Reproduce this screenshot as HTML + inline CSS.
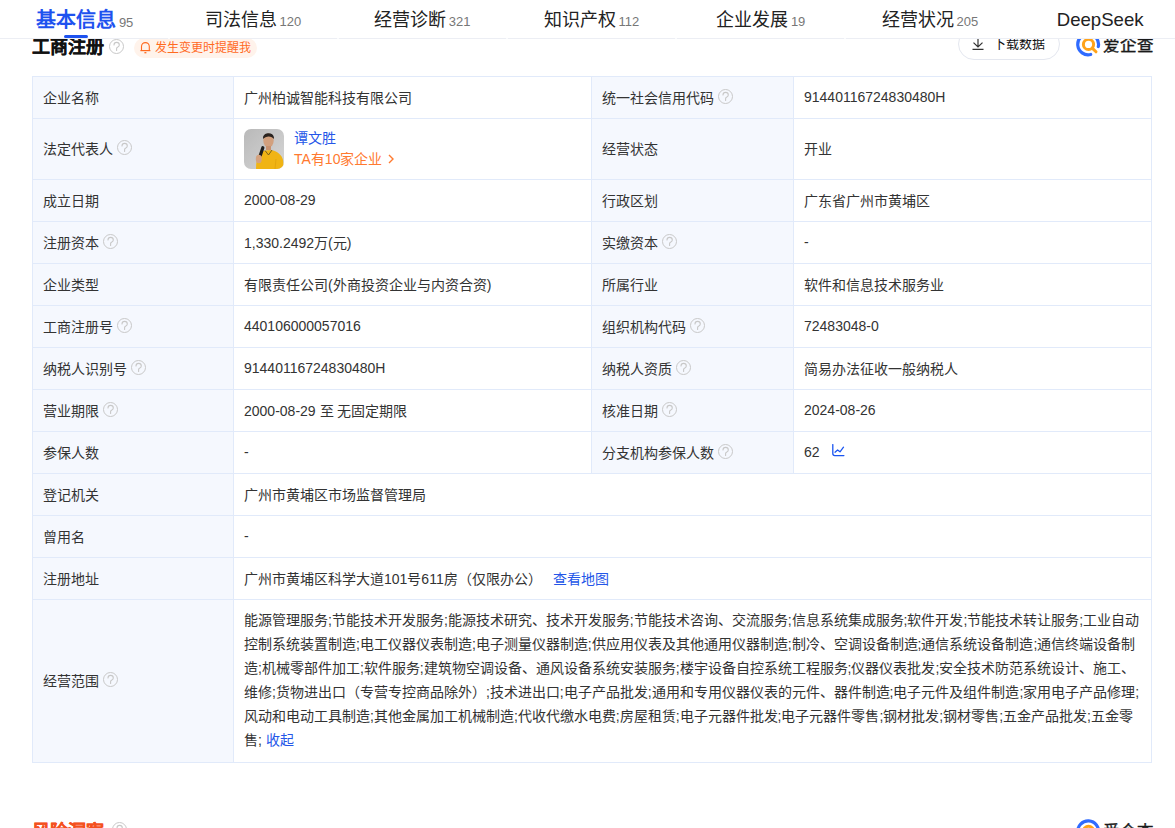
<!DOCTYPE html>
<html lang="zh-CN"><head><meta charset="utf-8">
<style>
*{margin:0;padding:0;box-sizing:border-box;}
html,body{width:1175px;height:828px;overflow:hidden;background:#fff;}
body{position:relative;font-family:"Liberation Sans",sans-serif;color:#333;font-size:14px;}
.hdr{position:absolute;left:0;top:0;width:1175px;height:39px;background:#fff;border-bottom:1px solid #eceef4;z-index:10;}
.tab{position:absolute;top:2px;height:36px;width:169.25px;text-align:center;white-space:nowrap;line-height:37px;font-size:18px;color:#222;}
.tab .n{font-size:13px;color:#777;margin-left:3px;}
.tab.act{font-size:20px;font-weight:bold;color:#1e52ef;}
.tab.act .n{font-weight:normal;-webkit-text-stroke:0;}
.bar{position:absolute;left:64px;top:35px;width:24px;height:3px;background:#1e52ef;border-radius:2px;z-index:11;}
.ttl{position:absolute;left:32px;top:35px;font-size:18px;font-weight:bold;color:#111;-webkit-text-stroke:0.25px #111;line-height:24px;white-space:nowrap;}
.qi{display:inline-block;width:15px;height:15px;vertical-align:middle;}
.pill{position:absolute;left:134px;top:38px;width:123px;height:20px;border-radius:10px;background:#fff3eb;color:#ff6a1f;font-size:12px;line-height:20px;white-space:nowrap;}
.pill svg{position:absolute;left:6px;top:3px;}
.pill span{position:absolute;left:21px;top:0;}
.dl{position:absolute;left:958px;top:28px;width:102px;height:32px;border:1px solid #e4e7ef;border-radius:16px;font-size:13px;color:#111;line-height:30px;white-space:nowrap;}
.dl svg{position:absolute;left:13px;top:9px;}
.dl span{position:absolute;left:34px;top:0px;}
.logo{position:absolute;left:1076px;top:32px;width:80px;height:26px;}
.logo span{position:absolute;left:27px;top:1px;font-size:16.5px;font-weight:normal;-webkit-text-stroke:0.45px #1a1a1a;color:#1a1a1a;line-height:24px;letter-spacing:0px;white-space:nowrap;}
.tbl{position:absolute;left:32px;top:76px;width:1120px;border:1px solid #e1eafa;}
.row{display:flex;height:42px;border-top:1px solid #e1eafa;}
.row:first-child{border-top:none;height:41px;}
.c{height:100%;display:flex;align-items:center;padding-left:10px;padding-bottom:2px;border-right:1px solid #e1eafa;white-space:nowrap;}
.l{background:#f5f8fe;}
.c1{width:201px;}.c2{width:358px;}.c3{width:202px;}.c4{width:357px;border-right:none;}
.wide{width:917px;border-right:none;}
.row .qi{margin-left:4px;margin-top:-1px;}
.lnk{color:#2456e8;}
.scope{display:block;padding-top:8px;line-height:24px;}
.scope div{white-space:nowrap;}
.rsk{position:absolute;left:32px;top:820px;font-size:18px;font-weight:bold;color:#f4511e;-webkit-text-stroke:0.25px #f4511e;line-height:24px;white-space:nowrap;}
</style></head>
<body>
<svg width="0" height="0" style="position:absolute">
 <defs>
  <symbol id="q" viewBox="0 0 15 15"><circle cx="7.5" cy="7.5" r="7" fill="none" stroke="#c8c8c8" stroke-width="1"/><path d="M5 6 C5 4.3 6.2 3.4 7.6 3.4 C9.1 3.4 10.3 4.4 10.3 5.9 C10.3 7.2 9.4 7.7 8.5 8.2 C7.9 8.5 7.6 8.9 7.6 9.6 L7.6 11.4" fill="none" stroke="#c8c8c8" stroke-width="1.1" stroke-linecap="round"/></symbol>
 </defs>
</svg>
<div class="hdr">
  <div class="tab act" style="left:0">基本信息<span class="n">95</span></div>
  <div class="tab" style="left:168.25px">司法信息<span class="n">120</span></div>
  <div class="tab" style="left:337.5px">经营诊断<span class="n">321</span></div>
  <div class="tab" style="left:506.75px">知识产权<span class="n">112</span></div>
  <div class="tab" style="left:676px">企业发展<span class="n">19</span></div>
  <div class="tab" style="left:845.25px">经营状况<span class="n">205</span></div>
  <div class="tab" style="left:1015.5px;font-size:18.6px;top:1px">DeepSeek</div>
</div>
<div class="bar"></div>
<div style="position:absolute;left:168px;top:38px;width:2px;height:1px;background:#fafbfd;z-index:12"></div><div style="position:absolute;left:337px;top:38px;width:2px;height:1px;background:#fafbfd;z-index:12"></div><div style="position:absolute;left:506px;top:38px;width:2px;height:1px;background:#fafbfd;z-index:12"></div><div style="position:absolute;left:675px;top:38px;width:2px;height:1px;background:#fafbfd;z-index:12"></div><div style="position:absolute;left:844px;top:38px;width:2px;height:1px;background:#fafbfd;z-index:12"></div><div style="position:absolute;left:1013px;top:38px;width:2px;height:1px;background:#fafbfd;z-index:12"></div>
<div class="ttl">工商注册 <svg class="qi" style="margin-left:0px;margin-top:-1px;position:relative;top:-1px"><use href="#q"/></svg></div>
<div class="pill"><svg width="12" height="14" viewBox="0 0 12 14"><path d="M1.5 9.6 V5.5 A3.9 3.9 0 0 1 9.3 5.5 V9.6" fill="none" stroke="#ff6a1f" stroke-width="1.1"/><path d="M0.4 9.6 H10.4" stroke="#ff6a1f" stroke-width="1.2"/><path d="M4.4 11.7 H6.4" stroke="#ff6a1f" stroke-width="1.3"/></svg><span>发生变更时提醒我</span></div>
<div class="dl"><svg width="12" height="12" viewBox="0 0 12 12"><path d="M6 0 V9 M1.5 4.6 L6 9 L10.5 4.6 M0.5 11.3 H11.5" fill="none" stroke="#333" stroke-width="1.2"/></svg><span>下载数据</span></div>
<div class="logo"><svg width="26" height="26" viewBox="0 0 26 26" style="position:absolute;left:0;top:0"><path d="M22.32 14.51 A10.4 10.4 0 1 0 14.67 22.44" fill="none" stroke="#2f6bff" stroke-width="3.2" stroke-linecap="round"/><circle cx="12.5" cy="12.4" r="5.1" fill="none" stroke="#ffa31a" stroke-width="3"/><path d="M16.2 16.1 L20 19.8" stroke="#ffa31a" stroke-width="3" stroke-linecap="round"/></svg><span>爱企查</span></div>

<div class="tbl">
  <div class="row"><div class="c l c1">企业名称</div><div class="c c2">广州柏诚智能科技有限公司</div><div class="c l c3">统一社会信用代码<svg class="qi"><use href="#q"/></svg></div><div class="c c4">91440116724830480H</div></div>
  <div class="row" style="height:61px"><div class="c l c1">法定代表人<svg class="qi"><use href="#q"/></svg></div><div class="c c2" style="position:relative">
    <svg width="40" height="40" viewBox="0 0 40 40" style="position:absolute;left:10px;top:10px"><defs><clipPath id="av"><rect width="40" height="40" rx="7"/></clipPath><linearGradient id="bg" x1="0" y1="0" x2="1" y2="1"><stop offset="0" stop-color="#b9b9b9"/><stop offset="1" stop-color="#d6d6d6"/></linearGradient></defs><g clip-path="url(#av)"><rect width="40" height="40" fill="url(#bg)"/><path d="M12 40 C12 28 15 23 21 21.5 L27 21 C33 22 38 26 39 31 L40 40 Z" fill="#f0b414"/><path d="M21 21.5 L24.5 26 L28 21" fill="none" stroke="#5a4a20" stroke-width="0.8"/><ellipse cx="24.5" cy="11.5" rx="5.2" ry="7" fill="#d2a07e"/><path d="M19 8.5 C19.5 3 29.5 2.5 30 8.5 L29.6 10 C28.5 6.5 21 6.5 19.4 10 Z" fill="#2b2420"/><path d="M22 17 L22 21 L27 21 L27 17 Z" fill="#c89270"/><rect x="16" y="17" width="3.2" height="11" rx="1.5" transform="rotate(18 17.6 22.5)" fill="#1e1e1e"/><ellipse cx="14.8" cy="30" rx="3" ry="4.2" fill="#d4a27f"/><path d="M31 40 L32 30" stroke="#e0a20c" stroke-width="0.8"/></g></svg>
    <span class="lnk" style="position:absolute;left:60px;top:9px;line-height:20px">谭文胜</span>
    <span style="position:absolute;left:60px;top:30px;line-height:20px;color:#ff7a30">TA有10家企业<svg width="8" height="10" viewBox="0 0 8 10" style="margin-left:5px;vertical-align:0px"><path d="M2 1 L6 5 L2 9" fill="none" stroke="#ff7a30" stroke-width="1.4"/></svg></span>
  </div><div class="c l c3">经营状态</div><div class="c c4">开业</div></div>
  <div class="row"><div class="c l c1">成立日期</div><div class="c c2">2000-08-29</div><div class="c l c3">行政区划</div><div class="c c4">广东省广州市黄埔区</div></div>
  <div class="row"><div class="c l c1">注册资本<svg class="qi"><use href="#q"/></svg></div><div class="c c2">1,330.2492万(元)</div><div class="c l c3">实缴资本<svg class="qi"><use href="#q"/></svg></div><div class="c c4">-</div></div>
  <div class="row"><div class="c l c1">企业类型</div><div class="c c2">有限责任公司(外商投资企业与内资合资)</div><div class="c l c3">所属行业</div><div class="c c4">软件和信息技术服务业</div></div>
  <div class="row"><div class="c l c1">工商注册号<svg class="qi"><use href="#q"/></svg></div><div class="c c2">440106000057016</div><div class="c l c3">组织机构代码<svg class="qi"><use href="#q"/></svg></div><div class="c c4">72483048-0</div></div>
  <div class="row"><div class="c l c1">纳税人识别号<svg class="qi"><use href="#q"/></svg></div><div class="c c2">91440116724830480H</div><div class="c l c3">纳税人资质<svg class="qi"><use href="#q"/></svg></div><div class="c c4">简易办法征收一般纳税人</div></div>
  <div class="row"><div class="c l c1">营业期限<svg class="qi"><use href="#q"/></svg></div><div class="c c2">2000-08-29 至 无固定期限</div><div class="c l c3">核准日期<svg class="qi"><use href="#q"/></svg></div><div class="c c4">2024-08-26</div></div>
  <div class="row"><div class="c l c1">参保人数</div><div class="c c2">-</div><div class="c l c3">分支机构参保人数<svg class="qi"><use href="#q"/></svg></div><div class="c c4">62<svg width="13" height="13" viewBox="0 0 13 13" style="margin-left:12px;margin-top:-3px"><path d="M0.8 0.6 V9.6 Q0.8 11.6 2.8 11.6 H11.9" fill="none" stroke="#1a55f0" stroke-width="1.3" stroke-linecap="round"/><path d="M3 8.2 L5.6 6 L8 7.8 L11.5 3.2" fill="none" stroke="#1a55f0" stroke-width="1.3" stroke-linecap="round" stroke-linejoin="round"/></svg></div></div>
  <div class="row"><div class="c l c1">登记机关</div><div class="c wide">广州市黄埔区市场监督管理局</div></div>
  <div class="row"><div class="c l c1">曾用名</div><div class="c wide">-</div></div>
  <div class="row"><div class="c l c1">注册地址</div><div class="c wide">广州市黄埔区科学大道101号611房（仅限办公）<span class="lnk" style="margin-left:11px">查看地图</span></div></div>
  <div class="row" style="height:163px"><div class="c l c1">经营范围<svg class="qi"><use href="#q"/></svg></div><div class="c wide" style="align-items:flex-start"><div class="scope">
<div>能源管理服务;节能技术开发服务;能源技术研究、技术开发服务;节能技术咨询、交流服务;信息系统集成服务;软件开发;节能技术转让服务;工业自动</div>
<div>控制系统装置制造;电工仪器仪表制造;电子测量仪器制造;供应用仪表及其他通用仪器制造;制冷、空调设备制造;通信系统设备制造;通信终端设备制</div>
<div>造;机械零部件加工;软件服务;建筑物空调设备、通风设备系统安装服务;楼宇设备自控系统工程服务;仪器仪表批发;安全技术防范系统设计、施工、</div>
<div>维修;货物进出口（专营专控商品除外）;技术进出口;电子产品批发;通用和专用仪器仪表的元件、器件制造;电子元件及组件制造;家用电子产品修理;</div>
<div>风动和电动工具制造;其他金属加工机械制造;代收代缴水电费;房屋租赁;电子元器件批发;电子元器件零售;钢材批发;钢材零售;五金产品批发;五金零</div>
<div>售; <span class="lnk">收起</span></div>
</div></div></div>
</div>

<div class="rsk">风险洞察 <svg class="qi" style="margin-left:3px;margin-top:-1px;position:relative;top:-3px"><use href="#q"/></svg></div>
<div class="logo" style="top:819px"><svg width="26" height="26" viewBox="0 0 26 26" style="position:absolute;left:0;top:0"><path d="M22.32 14.51 A10.4 10.4 0 1 0 14.67 22.44" fill="none" stroke="#2f6bff" stroke-width="3.2" stroke-linecap="round"/><circle cx="12.5" cy="12.4" r="5.1" fill="none" stroke="#ffa31a" stroke-width="3"/><path d="M16.2 16.1 L20 19.8" stroke="#ffa31a" stroke-width="3" stroke-linecap="round"/></svg><span>爱企查</span></div>
</body></html>
